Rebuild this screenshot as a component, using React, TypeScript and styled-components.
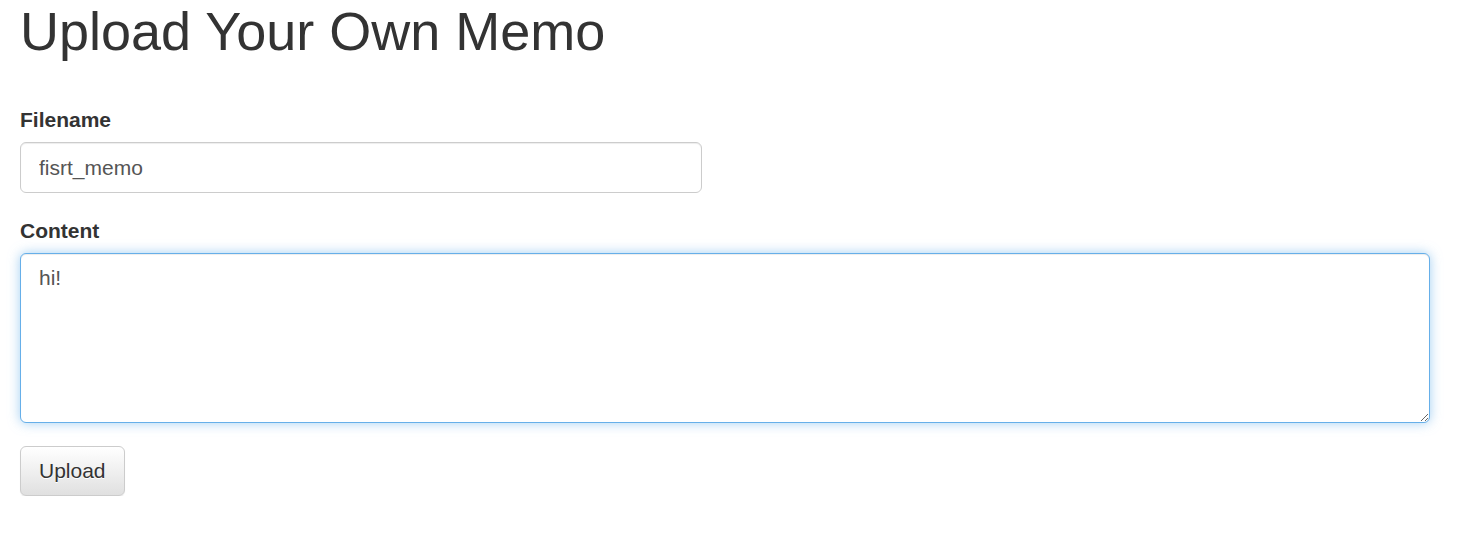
import React from 'react';
import styled, { createGlobalStyle } from 'styled-components';

const GlobalStyle = createGlobalStyle`
  * {
    box-sizing: border-box;
  }
  body {
    margin: 0;
    background: #fff;
    color: #333;
    font-family: 'Liberation Sans', Arial, Helvetica, sans-serif;
    font-size: 21px;
    line-height: 1.42857;
  }
`;

const Page = styled.div`
  padding: 2px 38px 0 20px;
`;

const Title = styled.h1`
  margin: 0 0 43.5px;
  font-size: 54px;
  font-weight: 500;
  line-height: 1.1;
  color: #333;
`;

const Form = styled.form`
  display: flex;
  flex-direction: column;
  align-items: flex-start;
`;

const FormGroup = styled.div`
  width: 100%;
  margin-bottom: 22.5px;
`;

const Label = styled.label`
  display: block;
  margin-bottom: 7.5px;
  font-weight: 700;
  line-height: 30px;
`;

const fieldBase = `
  display: block;
  padding: 9px 18px;
  font-family: 'Liberation Sans', Arial, Helvetica, sans-serif;
  font-size: 21px;
  line-height: 1.42857;
  color: #555;
  background: #fff;
  border: 1px solid #ccc;
  border-radius: 6px;
  box-shadow: inset 0 1px 1px rgba(0, 0, 0, 0.075);
  outline: none;
`;

const TextInput = styled.input`
  ${fieldBase}
  width: 682px;
  height: 51px;
`;

const TextArea = styled.textarea`
  ${fieldBase}
  width: 100%;
  height: 170px;
  resize: vertical;
  caret-color: #333;
  border-color: #66afe9;
  box-shadow: inset 0 1px 1px rgba(0, 0, 0, 0.075), 0 0 12px rgba(102, 175, 233, 0.6);
`;

const Button = styled.button`
  height: 50px;
  padding: 9px 18px;
  font-family: 'Liberation Sans', Arial, Helvetica, sans-serif;
  font-size: 21px;
  line-height: 1.42857;
  color: #333;
  text-shadow: 0 1px 0 #fff;
  background: linear-gradient(to bottom, #fff 0, #e0e0e0 100%);
  border: 1px solid #ccc;
  border-radius: 6px;
  box-shadow: inset 0 1px 0 rgba(255, 255, 255, 0.15), 0 1px 1px rgba(0, 0, 0, 0.075);
  cursor: pointer;
`;

export default function App() {
  return (
    <>
      <GlobalStyle />
      <Page>
        <Title>Upload Your Own Memo</Title>
        <Form onSubmit={(e) => e.preventDefault()}>
          <FormGroup>
            <Label htmlFor="filename">Filename</Label>
            <TextInput id="filename" type="text" defaultValue="fisrt_memo" />
          </FormGroup>
          <FormGroup>
            <Label htmlFor="content">Content</Label>
            <TextArea id="content" defaultValue="hi!" autoFocus />
          </FormGroup>
          <Button type="submit">Upload</Button>
        </Form>
      </Page>
    </>
  );
}
